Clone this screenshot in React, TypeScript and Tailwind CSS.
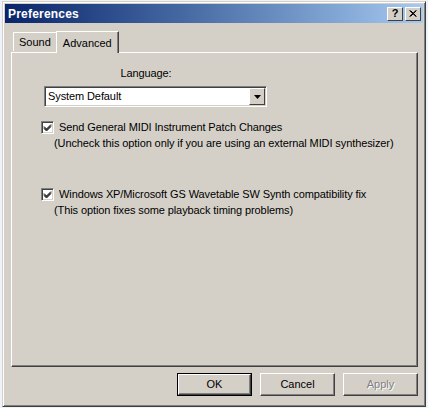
import React from 'react'

const FONT = { fontFamily: '"Liberation Sans", Arial, sans-serif' }

function Check() {
  return (
    <span className="w-[13px] h-[13px] shrink-0 bg-white border border-t-[#808080] border-l-[#808080] border-r-white border-b-white flex items-center justify-center shadow-[inset_1px_1px_0_#404040,inset_-1px_-1px_0_#d4d0c8]">
      <svg width="9" height="9" viewBox="0 0 9 9">
        <path d="M1 3.5 L3.5 6 L8 1.5 M1 4.5 L3.5 7 L8 2.5 M1 5.5 L3.5 8 L8 3.5" stroke="#000" strokeWidth="1" fill="none" />
      </svg>
    </span>
  )
}

function Btn({ label, def, disabled }: { label: string; def?: boolean; disabled?: boolean }) {
  return (
    <div className={`h-[23px] w-[75px] ${def ? 'border border-black' : ''}`}>
      <div className="h-full w-full bg-[#d4d0c8] border border-t-white border-l-white border-r-[#404040] border-b-[#404040] shadow-[inset_-1px_-1px_0_#808080] flex items-center justify-center text-[11px]">
        <span className={disabled ? 'text-[#808080] [text-shadow:1px_1px_0_#fff]' : 'text-black'}>{label}</span>
      </div>
    </div>
  )
}

export default function App() {
  return (
    <div className="w-[428px] h-[408px] bg-[#eef3fa] pl-[2px] pt-[1px] overflow-hidden" style={FONT}>
      <div className="w-[424px] h-[406px] bg-[#d4d0c8] border border-t-[#d4d0c8] border-l-[#d4d0c8] border-r-[#404040] border-b-[#404040] shadow-[inset_1px_1px_0_#fff,inset_-1px_-1px_0_#808080] p-[2px] flex flex-col">
        <div className="h-[19px] bg-gradient-to-r from-[#0a246a] to-[#a6caf0] flex items-center pl-[3px] pr-[2px]">
          <span className="text-white font-bold text-[12px] tracking-[0.2px]">Preferences</span>
          <div className="ml-auto flex items-center gap-[2px]">
            <div className="w-[16px] h-[14px] bg-[#d4d0c8] border border-t-white border-l-white border-r-[#404040] border-b-[#404040] flex items-center justify-center text-[11px] font-bold leading-none">?</div>
            <div className="w-[16px] h-[14px] bg-[#d4d0c8] border border-t-white border-l-white border-r-[#404040] border-b-[#404040] flex items-center justify-center">
              <svg width="8" height="7" viewBox="0 0 8 7">
                <path d="M0.5 0.5 L7 6.5 M1.5 0.5 L7.5 6.5 M7 0.5 L0.5 6.5 M7.5 0.5 L1.5 6.5" stroke="#000" strokeWidth="1" />
              </svg>
            </div>
          </div>
        </div>

        <div className="pl-[6px] pr-[5px] pt-[8px] flex flex-col">
          <div className="flex items-end h-[21px] pl-[2px] relative z-10 text-[11px]">
            <div className="h-[19px] px-[5px] bg-[#d4d0c8] border border-b-0 border-t-white border-l-white border-r-[#404040] flex items-center mb-[1px]">Sound</div>
            <div className="h-[22px] -mb-[1px] px-[6px] -ml-[1px] bg-[#d4d0c8] border border-b-0 border-t-white border-l-white border-r-[#404040] shadow-[inset_-1px_0_0_#808080] flex items-start pt-[3px]">Advanced</div>
          </div>
          <div className="h-[315px] border border-t-white border-l-white border-r-[#404040] border-b-[#404040] shadow-[inset_-1px_-1px_0_#808080] flex flex-col text-[11px] leading-[13px] whitespace-nowrap tracking-[-0.1px]">
            <div className="text-center w-[268px] mt-[14px]">Language:</div>
            <div className="ml-[32px] mt-[6px] w-[223px] h-[21px] bg-white border border-t-[#808080] border-l-[#808080] border-r-white border-b-white shadow-[inset_1px_1px_0_#404040,inset_-1px_-1px_0_#d4d0c8] flex items-center">
              <span className="pl-[3px] flex-1">System Default</span>
              <div className="w-[16px] h-[17px] mr-[1px] bg-[#d4d0c8] border border-t-white border-l-white border-r-[#404040] border-b-[#404040] flex items-center justify-center">
                <svg width="7" height="4" viewBox="0 0 7 4"><path d="M0 0 H7 L3.5 4 Z" fill="#000" /></svg>
              </div>
            </div>

            <div className="ml-[29px] mt-[14px] flex items-center gap-[5px]">
              <Check />
              <span>Send General MIDI Instrument Patch Changes</span>
            </div>
            <div className="ml-[42px] mt-[3px]">(Uncheck this option only if you are using an external MIDI synthesizer)</div>

            <div className="ml-[29px] mt-[38px] flex items-center gap-[5px]">
              <Check />
              <span>Windows XP/Microsoft GS Wavetable SW Synth compatibility fix</span>
            </div>
            <div className="ml-[42px] mt-[3px]">(This option fixes some playback timing problems)</div>
          </div>

          <div className="flex justify-end gap-[8px] mt-[6px]">
            <Btn label="OK" def />
            <Btn label="Cancel" />
            <Btn label="Apply" disabled />
          </div>
        </div>
      </div>
    </div>
  )
}
